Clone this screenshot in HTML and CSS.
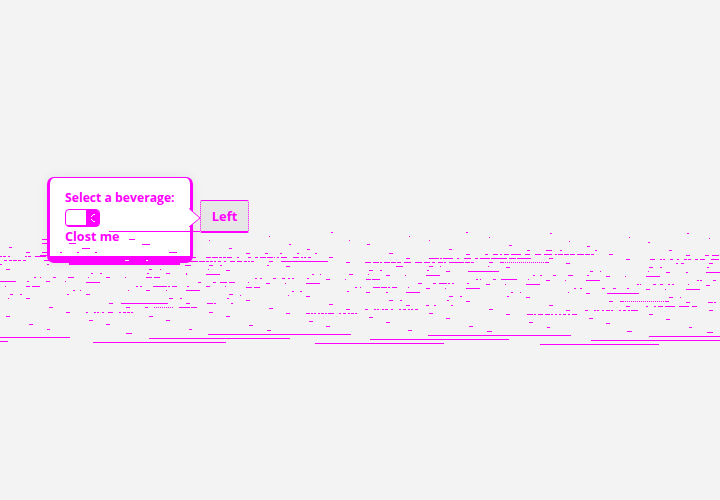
FILE: index.html
```html
<!DOCTYPE html>
<html>
<head>
  <meta charset="UTF-8" />
  <title>Popover</title>
  <link rel="stylesheet" href="styles.css">
</head>
<body>

<div class="stage">
  <!-- Popover with the form -->
  <div class="popover">
    <label class="popover-label">Select a beverage:</label>
    <div class="fake-select">
      <span class="fake-select-value"></span>
      <span class="fake-select-arrow">
        <svg width="4" height="8" viewBox="0 0 4 8"><path d="M0 2h1V1h1V0h2v1H2v1H1v1H0zM0 5h1v1h1v1h2v1H2V7H1V6H0z" fill="#fff"/></svg>
      </span>
    </div>
    <a class="popover-close">Clost me</a>
    <svg class="popover-tail" width="12" height="20" viewBox="0 0 12 20">
      <path d="M0 .5 11 10 0 19" fill="#fff" stroke="#f0f"/>
    </svg>
  </div>

  <button class="trigger">Left</button>
</div>

<!-- Torn scanlines drawn over the whole page -->
<svg class="glitch" width="720" height="500" viewBox="0 0 720 500">
  <g fill="none" stroke="#f0f" shape-rendering="crispEdges" transform="translate(0 .5)">
    <!-- left part -->
    <path d="M109 231H200M67 225H99M69 243H76M129 239H135M142 244H150M82 248H90M209 240H210M229 248H232M60 252H62M77 252H79M95 252H97M169 252H177M42 239H47M42 243H47M9 247H12M26 252H30M42 252H47M40 255H48"/>
    <path d="M0 256H2M3 256H6M8 256H10M25 256H27M28 256H31M35 256H46M4 260H7M9 260H12M13 260H17M18 260H21M23 260H26M44 260H50M0 264H2M47 264H49M6 269H10M149 269H152M160 269H161M91 273H93M100 273H102M147 273H149M166 273H170M186 273H187"/>
    <path d="M185 257H196M206 257H211M212 257H218M219 257H222M223 257H226M227 257H232M237 257H239M185 261H198M199 261H205M206 261H209M210 261H213M214 261H216M218 261H221M224 261H226M230 261H235M237 261H240M185 265H191M209 265H213M220 265H222M208 269H209M226 270H230M186 274H187M206 274H220"/>
    <path d="M34 277H36M40 277H41M53 277H56M68 277H74M88 277H89M106 277H110M125 277H126M146 277H152M154 277H160M0 281H16M27 281H29M46 281H50M65 281H66M86 282H100M198 282H201M213 282H216M220 282H227M229 282H235"/>
    <path d="M5 286H6M26 286H30M32 286H40M136 286H138M140 286H142M153 286H167M168 286H170M172 286H177M187 286H189M206 286H210M225 286H226M73 290H75M80 290H81M128 290H129M146 290H150M166 290H167M186 290H200M10 294H13M20 294H22M67 294H69M86 294H90M229 294H233M8 298H9M26 298H30M169 298H173M180 298H182M227 298H229"/>
    <path d="M109 303H113M121 303H168M186 303H190M207 303H213M214 303H216M231 303H233M49 307H53M126 307H130M145 307H148M179 307H190M191 307H197M66 312H70M86 312H88M94 312H96M97 312H99M102 312H104M108 312H113M119 312H121M123 312H126M127 312H130M131 312H133M209 312H213M6 316H10M149 316H153M226 316H230M89 320H93M166 320H170M29 324H33M106 324H110M47 329H50M189 329H192M126 333H132"/>
    <path d="M154 307H173" stroke-dasharray="1 1"/>
    <!-- middle part -->
    <path d="M331 232H333M466 232H468M269 236H270M409 236H410M349 240H350M429 240H430M289 244H291M367 244H370M307 249H310M449 249H452M246 253H250M265 253H268M280 253H282M297 253H299M315 253H317M389 253H393M466 254H470"/>
    <path d="M248 257H251M255 257H258M260 257H266M267 257H273M274 257H275M277 257H279M281 257H287M293 257H299M301 257H303M304 257H306M308 257H311M329 257H333M406 258H410M429 258H439M440 258H442M443 258H453M457 258H459M464 258H471M475 258H478"/>
    <path d="M240 261H242M244 261H247M248 261H250M251 261H254M269 261H273M281 261H328M346 262H350M365 262H371M373 262H379M380 262H382M384 262H390M391 262H396M397 262H401M404 262H411M415 262H422M424 262H430M432 262H435M438 262H443M444 262H446M449 262H464M465 262H470M471 262H474"/>
    <path d="M267 265H269M286 266H290M396 266H403M429 266H433M440 266H441M369 270H373M380 270H382M427 270H429M446 271H450M468 271H480M312 274H314M320 274H321M349 274H353M368 274H369M386 275H390M405 275H406M426 275H440"/>
    <path d="M255 278H257M260 278H262M273 278H276M282 278H285M288 278H290M292 278H294M307 278H309M326 279H330M345 279H346M366 279H371M372 279H380M476 279H478M248 282H249M266 283H270M285 283H286M306 283H320M418 283H422M433 283H436M439 283H447M448 283H450M452 283H454M467 283H469"/>
    <path d="M246 287H252M254 287H260M355 287H357M360 287H361M373 287H380M381 287H387M388 287H390M392 287H397M408 287H409M426 288H430M445 288H446M466 288H480M292 291H294M300 291H302M347 291H349M366 292H370M386 292H388M406 292H420M240 295H241M288 295H289M306 296H310M449 296H453M460 296H462"/>
    <path d="M246 300H250M389 300H393M400 300H402M447 300H449M466 301H470M329 304H333M406 305H410M426 305H429M434 305H436M451 305H453M269 308H273M346 309H350M365 309H368M374 309H376M377 309H379M382 309H384M385 309H388M391 309H393M399 309H401M403 309H406M408 309H410M411 309H413M415 309H418"/>
    <path d="M286 313H290M306 313H310M311 313H313M314 313H316M318 313H320M321 313H324M325 313H327M328 313H334M339 313H341M343 313H346M348 313H350M351 313H354M355 313H357M429 313H433M369 317H373M446 318H450M309 321H313M386 322H390M249 325H253M326 326H330M469 326H473M267 330H271M408 330H412"/>
    <!-- right part -->
    <path d="M550 233H552M687 233H689M489 237H490M629 237H630M709 238H710M569 241H570M648 242H650M509 245H512M587 246H590M527 250H530M546 250H552M560 250H562M595 250H597M669 250H672"/>
    <path d="M485 254H488M493 254H498M500 254H502M504 254H509M511 254H521M525 254H530M535 254H541M544 254H552M555 254H557M558 254H563M564 254H569M570 254H575M577 254H584M585 254H590M591 254H594M609 254H613M686 255H690M705 255H709M712 255H719"/>
    <path d="M480 258H490M491 258H507M509 258H516M517 258H531M549 258H553M626 259H630M650 259H655M660 259H662M663 259H665M670 259H673M677 259H679M684 259H687M688 259H691M695 259H698M700 259H705M711 259H719M489 262H493M500 262H504M545 262H549M566 263H570M676 263H678M681 263H684M709 263H713"/>
    <path d="M505 262H545" stroke-dasharray="1 1"/>
    <path d="M488 266H489M506 267H510M649 267H653M660 267H662M707 267H709M480 271H499M590 271H593M600 271H601M648 271H649M666 272H670M686 272H688M706 272H720M533 275H535M540 275H542M553 275H556M568 275H573M587 275H589M606 276H610M625 276H626M646 276H660"/>
    <path d="M480 279H481M493 279H496M501 279H517M528 279H529M546 280H550M565 280H566M586 280H600M697 280H699M700 280H702M713 280H716M486 284H490M505 284H506M526 284H540M637 284H639M640 284H641M653 284H656M660 284H663M668 284H670M672 284H674M688 284H689M706 285H710"/>
    <path d="M574 288H576M580 288H582M602 288H605M613 288H616M627 288H629M646 289H650M665 289H666M686 289H700M511 292H513M520 292H521M568 292H569M586 293H590M607 293H639M507 296H509M526 297H530M669 297H673M680 297H681M609 301H613M620 301H624M665 301H669M686 302H690M708 302H713M714 302H716"/>
    <path d="M625 301H665" stroke-dasharray="1 1"/>
    <path d="M549 305H553M626 306H630M646 306H648M654 306H656M658 306H663M665 306H675M679 306H689M692 306H697M489 309H493M566 310H570M585 310H588M594 310H596M597 310H599M602 310H604M606 310H610M611 310H613M619 310H621M623 310H626M628 310H630M631 310H638M709 310H713"/>
    <path d="M506 314H510M527 314H533M534 314H536M538 314H543M545 314H550M551 314H553M555 314H557M559 314H561M563 314H566M568 314H570M572 314H577M649 314H653M589 318H593M666 319H670M529 322H533M606 323H610M547 327H550M689 327H692M487 331H492M627 331H632M707 332H713"/>
    <!-- long lines at the bottom -->
    <path d="M208 334H351M428 335H571M649 336H720M0 337H70M149 338H290M370 339H509M591 340H720M0 341H8M93 342H226M315 343H444M540 344H659"/>
    <!-- specks in the popover's thick edge -->
    <path d="M125 260H129M146 260H148" stroke="#fff"/>
  </g>
</svg>

</body>
</html>
```

FILE: styles.css
```css
body {
  margin: 0;
  height: 500px;
  overflow: hidden;
  position: relative;
  background-color: #f3f3f3;
  font-family: "Open Sans", "Noto Sans", sans-serif;
  color: #f0f;
}

/* Holds the popover and its trigger side by side */
.stage {
  display: flex;
  align-items: flex-start;
  padding: 177px 0 0 47px;
}

.popover {
  position: relative;
  box-sizing: border-box;
  width: 146px;
  height: 86px;
  padding: 13px 15px 0 15px;
  display: flex;
  flex-direction: column;
  align-items: flex-start;
  background-color: #fff;
  border-style: solid;
  border-color: #f0f;
  border-width: 1px 3px 7px 3px;
  border-radius: 7px;
  box-shadow: 0 0 12px rgba(0, 0, 0, 0.08);
}

/* Narrower strip under the thick bottom edge */
.popover::after {
  content: "";
  position: absolute;
  left: 19px;
  right: 10px;
  bottom: -9px;
  height: 2px;
  background-color: #f0f;
}

.popover-label {
  font-size: 12.2px;
  line-height: 14px;
  font-weight: 700;
  white-space: nowrap;
}

.fake-select {
  display: flex;
  box-sizing: border-box;
  width: 35px;
  height: 18px;
  margin-top: 4px;
  border: 1px solid #f0f;
  border-radius: 4px;
  overflow: hidden;
}

.fake-select-value {
  flex: 1;
}

.fake-select-arrow {
  width: 13px;
  display: flex;
  align-items: center;
  justify-content: center;
  background-color: #f0f;
}

.popover-close {
  margin-top: 2px;
  font-size: 12.6px;
  line-height: 16px;
  font-weight: 700;
  white-space: nowrap;
}

/* Tail pointing at the trigger */
.popover-tail {
  position: absolute;
  top: 30px;
  right: -11px;
}

.trigger {
  box-sizing: border-box;
  width: 49px;
  height: 33px;
  margin: 23px 0 0 7px;
  padding: 0;
  background-color: #e6e6e6;
  border: 1px dotted #f0f;
  border-top-style: solid;
  border-bottom: 2px solid #f0f;
  border-radius: 2px;
  color: #f0f;
  font-family: inherit;
  font-size: 13px;
  font-weight: 700;
}

/* Scanlines lie over everything */
.glitch {
  position: absolute;
  top: 0;
  left: 0;
}
```
